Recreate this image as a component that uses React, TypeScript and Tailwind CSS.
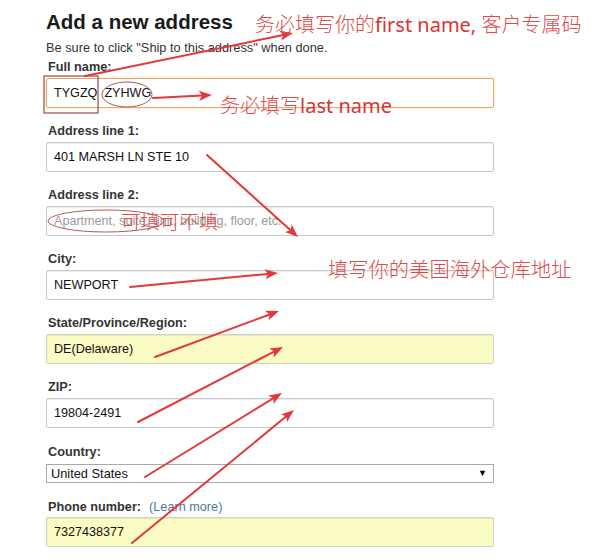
import React from "react";

const sans = { fontFamily: '"Liberation Sans", Arial, sans-serif' };

type Seg = [number, number, number, number];

const arrows: Seg[] = [
  [85, 76, 293, 33],
  [153, 98, 212, 95],
  [207, 155, 298, 237],
  [130, 287, 278, 273],
  [155, 357, 279, 311],
  [138, 422, 283, 347],
  [145, 477, 282, 393],
  [132, 543, 294, 410],
];

function Arrow({ s }: { s: Seg }) {
  const [x1, y1, x2, y2] = s;
  const dx = x2 - x1;
  const dy = y2 - y1;
  const len = Math.hypot(dx, dy);
  const ux = dx / len;
  const uy = dy / len;
  const L = 13;
  const W = 5;
  const bx = x2 - ux * L;
  const by = y2 - uy * L;
  const px = -uy;
  const py = ux;
  const nx = bx + ux * 3;
  const ny = by + uy * 3;
  const pts = `${x2},${y2} ${bx + px * W},${by + py * W} ${nx},${ny} ${bx - px * W},${by - py * W}`;
  return (
    <g>
      <line x1={x1} y1={y1} x2={nx} y2={ny} stroke="#e4393b" strokeWidth={2} strokeLinecap="round" />
      <polygon points={pts} fill="#e4393b" />
    </g>
  );
}

function Label({ children }: { children: React.ReactNode }) {
  return (
    <div className="h-[16px] leading-[16px] pl-[2px] mb-[3px] text-[12.7px] font-bold text-[#333]">
      {children}
    </div>
  );
}

function Box({
  children,
  yellow,
  focus,
}: {
  children?: React.ReactNode;
  yellow?: boolean;
  focus?: boolean;
}) {
  const base =
    "h-[30px] w-[448px] rounded-[2px] flex items-center pl-[7px] text-[12.6px] text-[#111] whitespace-pre";
  const skin = focus
    ? " border border-[#e6ab66] shadow-[0_0_3px_rgba(228,140,40,0.35)] bg-white"
    : yellow
    ? " border border-[#d2d2c0] shadow-[inset_0_1px_1px_rgba(0,0,0,0.08)] bg-[#fbfbc4]"
    : " border border-[#c9c9c9] shadow-[inset_0_1px_1px_rgba(0,0,0,0.08)] bg-white";
  return <div className={base + skin}>{children}</div>;
}

export default function App() {
  return (
    <div className="relative w-[600px] h-[559px] overflow-hidden bg-white" style={sans}>
      <div className="pl-[46px] pt-[10px]">
        <div className="h-[24px] leading-[24px] text-[20.5px] font-bold text-[#1a1a1a]">
          Add a new address
        </div>
        <div className="mt-[6px] h-[16px] leading-[16px] text-[12.8px] text-[#333]">
          Be sure to click "Ship to this address" when done.
        </div>

        <div className="mt-[3px] mb-[15px]">
          <Label>Full name:</Label>
          <Box focus>{"TYGZQ  ZYHWG"}</Box>
        </div>

        <div className="mb-[15px]">
          <Label>Address line 1:</Label>
          <Box>401 MARSH LN STE 10</Box>
        </div>

        <div className="mb-[15px]">
          <Label>Address line 2:</Label>
          <Box>
            <span className="text-[#9a9a9a]">Apartment, suite, unit, building, floor, etc.</span>
          </Box>
        </div>

        <div className="mb-[15px]">
          <Label>City:</Label>
          <Box>NEWPORT</Box>
        </div>

        <div className="mb-[15px]">
          <Label>State/Province/Region:</Label>
          <Box yellow>DE(Delaware)</Box>
        </div>

        <div className="mb-[16px]">
          <Label>ZIP:</Label>
          <Box>19804-2491</Box>
        </div>

        <div className="mb-[16px]">
          <div className="h-[16px] leading-[16px] pl-[2px] mb-[4px] text-[12.7px] font-bold text-[#333]">
            Country:
          </div>
          <div className="h-[19px] w-[448px] border border-[#a9a9a9] bg-white flex items-center justify-between pl-[4px] pr-[6px] text-[12.8px] text-[#111]">
            <span>United States</span>
            <span className="text-[9px] leading-none text-black">▼</span>
          </div>
        </div>

        <div>
          <div className="h-[16px] leading-[16px] pl-[2px] mb-[2px] text-[12.7px] text-[#333] flex">
            <span className="font-bold">Phone number:</span>
            <span className="ml-[8px] text-[#4b7a98]">(Learn more)</span>
          </div>
          <Box yellow>7327438377</Box>
        </div>
      </div>

      {/* annotation overlay */}
      <svg
        className="absolute left-0 top-0 pointer-events-none"
        width={600}
        height={559}
        viewBox="0 0 600 559"
      >
        <rect x={44} y={76} width={54} height={37} fill="none" stroke="#9a4b4b" strokeWidth={1.2} />
        <ellipse cx={127} cy={94.5} rx={25} ry={12.5} fill="none" stroke="#a85a5a" strokeWidth={1} />
        <ellipse cx={106} cy={221} rx={58} ry={11} fill="none" stroke="#b05c5c" strokeWidth={1} />
        {arrows.map((s, i) => (
          <Arrow key={i} s={s} />
        ))}
      </svg>

      <div
        className="absolute left-[255px] top-[13px] whitespace-nowrap text-[20px] leading-[22px] text-[#dd4b4b] pointer-events-none"
        style={{ fontFamily: '"Noto Sans CJK SC", "Noto Sans", sans-serif' }}
      >
        <span className="font-light">务必填写你的</span>
        <span className="text-[#d73535]" style={{ fontFamily: '"Noto Sans", sans-serif' }}>
          first name,{" "}
        </span>
        <span className="font-light">客户专属码</span>
      </div>

      <div
        className="absolute left-[220px] top-[94px] whitespace-nowrap text-[20px] leading-[22px] text-[#dd4b4b] pointer-events-none"
        style={{ fontFamily: '"Noto Sans CJK SC", "Noto Sans", sans-serif' }}
      >
        <span className="font-light">务必填写</span>
        <span className="text-[#d73535]" style={{ fontFamily: '"Noto Sans", sans-serif' }}>
          last name
        </span>
      </div>

      <div
        className="absolute left-[121px] top-[210px] whitespace-nowrap text-[19.5px] leading-[22px] font-light text-[#dd4b4b] pointer-events-none"
        style={{ fontFamily: '"Noto Sans CJK SC", sans-serif' }}
      >
        可填可不填
      </div>

      <div
        className="absolute left-[328px] top-[257px] whitespace-nowrap text-[20.3px] leading-[22px] font-light text-[#dd4b4b] pointer-events-none"
        style={{ fontFamily: '"Noto Sans CJK SC", sans-serif' }}
      >
        填写你的美国海外仓库地址
      </div>
    </div>
  );
}
